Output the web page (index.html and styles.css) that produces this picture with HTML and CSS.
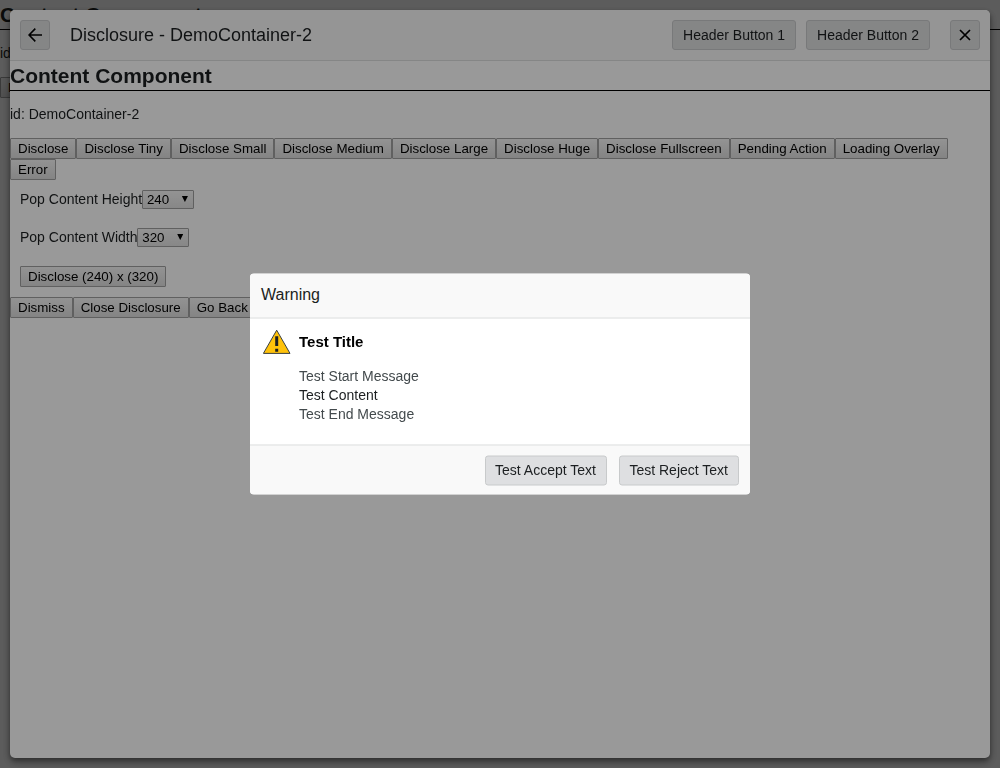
FILE: index.html
```html
<!DOCTYPE html>
<html lang="en">
<head>
<meta charset="utf-8">
<title>Disclosure</title>
<link rel="stylesheet" href="styles.css">
</head>
<body>
<main class="page">
  <h2 class="content-title">Content Component</h2>
  <p class="content-id">id: DemoContainer-1</p>
  <div class="button-row"><button class="native">Disclose</button></div>
</main>
<div class="overlay"></div>
<section class="disclosure">
  <header class="disclosure-header">
    <button class="btn icon-btn" aria-label="Back"><svg width="14" height="14" viewBox="0 0 14 14"><path d="M14 7H1.2M7.3 .6L1 7l6.3 6.4" fill="none" stroke="#000" stroke-width="1.6"/></svg></button>
    <h1 class="disclosure-title">Disclosure - DemoContainer-2</h1>
    <button class="btn">Header Button 1</button>
    <button class="btn">Header Button 2</button>
    <button class="btn icon-btn close" aria-label="Close"><svg width="14" height="14" viewBox="0 0 14 14"><path d="M2 2l10 10M12 2L2 12" fill="none" stroke="#000" stroke-width="1.7"/></svg></button>
  </header>
  <h2 class="content-title">Content Component</h2>
  <p class="content-id">id: DemoContainer-2</p>
  <div class="button-row">
    <button class="native">Disclose</button>
    <button class="native">Disclose Tiny</button>
    <button class="native">Disclose Small</button>
    <button class="native">Disclose Medium</button>
    <button class="native">Disclose Large</button>
    <button class="native">Disclose Huge</button>
    <button class="native">Disclose Fullscreen</button>
    <button class="native">Pending Action</button>
    <button class="native">Loading Overlay</button>
    <button class="native">Error</button>
  </div>
  <div class="size-form">
    <div class="field"><span>Pop Content Height</span><span class="select">240<i class="caret"></i></span></div>
    <div class="field"><span>Pop Content Width</span><span class="select">320<i class="caret"></i></span></div>
    <button class="native">Disclose (240) x (320)</button>
  </div>
  <div class="button-row">
    <button class="native">Dismiss</button>
    <button class="native">Close Disclosure</button>
    <button class="native">Go Back</button>
  </div>
</section>
<div class="overlay"></div>
<section class="dialog" role="dialog">
  <header class="dialog-header">Warning</header>
  <div class="dialog-body">
    <svg class="alert-icon" width="28" height="28" viewBox="0 0 28 28"><path d="M13.7 2.7L27 25.9H.4z" fill="#ffc20a" stroke="#383f42" stroke-width="1"/><path d="M12.2 8.8h3v9.6h-3zM12.2 21.2h3v3h-3z" fill="#1c1f21"/></svg>
    <div>
      <h2 class="dialog-title">Test Title</h2>
      <div class="message">Test Start Message</div>
      <div>Test Content</div>
      <div class="message">Test End Message</div>
    </div>
  </div>
  <footer class="dialog-footer">
    <button class="btn">Test Accept Text</button>
    <button class="btn">Test Reject Text</button>
  </footer>
</section>
</body>
</html>
```
FILE: styles.css
```css
* { box-sizing: border-box; }
html, body { height: 100%; }
body {
  margin: 0;
  overflow: hidden;
  background: #fff;
  color: #1c1f21;
  font: 14px/19px "Liberation Sans", Arial, sans-serif;
}
button { font-family: inherit; margin: 0; }
.overlay {
  position: fixed;
  inset: 0;
  background: rgba(0, 0, 0, .4);
}
.disclosure {
  position: fixed;
  inset: 10px;
  overflow: hidden;
  background: #fff;
  border-radius: 5px;
  box-shadow: 0 4px 8px rgba(0, 0, 0, .4), 0 2px 4px rgba(0, 0, 0, .25);
}
.disclosure-header {
  display: flex;
  align-items: center;
  gap: 10px;
  height: 51px;
  padding: 0 10px;
  background: #f9f9f9;
  border-bottom: 1px solid #dedfe0;
}
.disclosure-title {
  flex: 1;
  margin: 0 0 0 10px;
  font-size: 18px;
  font-weight: 400;
  line-height: 24px;
}
.btn {
  height: 30px;
  padding: 0 10px;
  border: 1px solid #c8cacb;
  border-radius: 3px;
  background: #dedfe0;
  color: #1c1f21;
  font-size: 14px;
  white-space: nowrap;
}
.icon-btn {
  display: flex;
  align-items: center;
  justify-content: center;
  width: 30px;
  padding: 0;
}
.close { margin-left: 10px; }
.content-title {
  height: 30px;
  margin: 0;
  border-bottom: 1px solid #000;
  font-size: 21px;
  line-height: 29px;
}
.content-id { margin: 14px 0; }
.button-row { display: flex; flex-wrap: wrap; }
.native {
  height: 21px;
  padding: 0 7.03px;
  border: 1px solid #a0a0a0;
  border-radius: 1px;
  background: linear-gradient(#f5f5f5, #dcdcdc);
  color: #000;
  font-size: 13.333px;
  line-height: 15px;
  white-space: nowrap;
}
.size-form { padding: 10px; }
.field { display: flex; height: 19px; margin-bottom: 19px; }
.select {
  display: flex;
  justify-content: space-between;
  width: 52px;
  margin-left: -.3px;
  padding: 0 5px 0 4px;
  border: 1px solid #a0a0a0;
  border-radius: 1px;
  background: linear-gradient(#f5f5f5, #e2e2e2);
  color: #000;
  font-size: 13.333px;
  line-height: 18px;
}
.caret {
  margin-top: 5px;
  width: 6px;
  height: 6px;
  background: #000;
  clip-path: polygon(0 0, 100% 0, 50% 100%);
}
.dialog {
  position: fixed;
  top: 50%;
  left: 50%;
  width: 500px;
  height: 221px;
  transform: translate(-50%, -50%);
  display: flex;
  flex-direction: column;
  overflow: hidden;
  border-radius: 4px;
  background: #fff;
}
.dialog-header {
  height: 45px;
  padding: 0 11px;
  border-bottom: 1px solid #dedfe0;
  background: #f9f9f9;
  font-size: 16px;
  line-height: 41px;
}
.dialog-body {
  flex: 1;
  display: flex;
  gap: 8.5px;
  padding: 9px 12.5px;
}
.dialog-title {
  margin: 4px 0 15px;
  color: #000;
  font-size: 15px;
  line-height: 20px;
}
.message { color: #434a4d; }
.dialog-footer {
  display: flex;
  align-items: center;
  justify-content: flex-end;
  gap: 12px;
  height: 50px;
  padding: 0 11px;
  border-top: 1px solid #dedfe0;
  background: #f9f9f9;
}
.dialog-footer .btn { padding: 0 10px 2px 9.5px; background: #dedfe1; }
```
